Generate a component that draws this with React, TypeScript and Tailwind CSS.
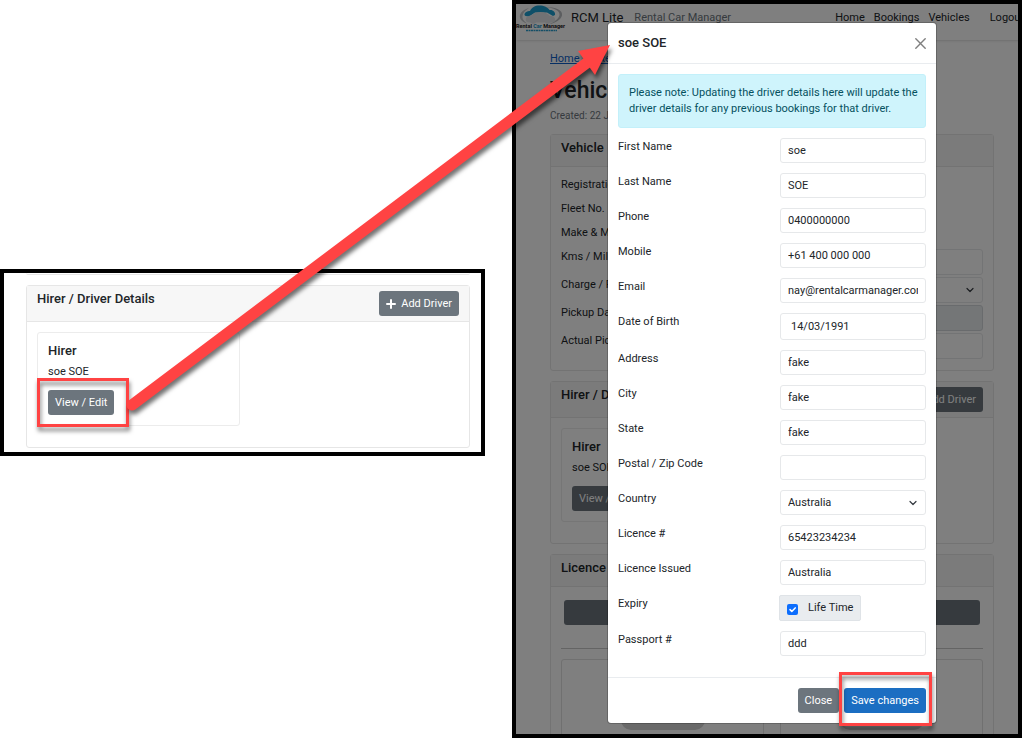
import { ReactNode } from "react"

interface IField {
    id: string
    label: string
    value: string
    kind?: "text" | "date" | "select" | "check"
}

const fields: IField[] = [
    { id: "firstName", label: "First Name", value: "soe" },
    { id: "lastName", label: "Last Name", value: "SOE" },
    { id: "phone", label: "Phone", value: "0400000000" },
    { id: "mobile", label: "Mobile", value: "+61 400 000 000" },
    { id: "email", label: "Email", value: "nay@rentalcarmanager.com" },
    { id: "dob", label: "Date of Birth", value: "14/03/1991", kind: "date" },
    { id: "address", label: "Address", value: "fake" },
    { id: "city", label: "City", value: "fake" },
    { id: "state", label: "State", value: "fake" },
    { id: "zip", label: "Postal / Zip Code", value: "" },
    { id: "country", label: "Country", value: "Australia", kind: "select" },
    { id: "licence", label: "Licence #", value: "65423234234" },
    { id: "issued", label: "Licence Issued", value: "Australia" },
    { id: "expiry", label: "Expiry", value: "Life Time", kind: "check" },
    { id: "passport", label: "Passport #", value: "ddd" },
]

const inputStyle = "block w-full min-w-0 rounded-[3px] border border-[#e6e8ea] bg-white text-[11px] leading-4 text-[#212529]"
const buttonStyle = "flex h-[25px] items-center whitespace-nowrap rounded-[3px] px-[7px] text-[11px] leading-4 text-white"

function Chevron() {
    return (
        <svg viewBox="0 0 16 16" className="pointer-events-none absolute right-[9px] top-[9px] size-2" fill="none" stroke="#343a40" strokeWidth="2.4" strokeLinecap="round" strokeLinejoin="round">
            <path d="m2 5 6 6 6-6" />
        </svg>
    )
}

function Card({ title, action, children }: { title: string, action?: ReactNode, children: ReactNode }) {
    return (
        <section className="rounded-[3px] border border-[#e6e6e6] bg-white">
            <div className={`flex items-start justify-between border-b border-[#e6e6e6] bg-[#f7f7f7] px-[10px] pt-[5px] ${action ? "h-9" : "h-8"}`}>
                <h2 className="text-[13px] font-medium leading-[15px]">{title}</h2>
                {action}
            </div>
            {children}
        </section>
    )
}

function HirerCard({ highlight }: { highlight?: boolean }) {
    const add = (
        <button className={`${buttonStyle} gap-[5px] bg-[#6c757d]`}>
            <svg viewBox="0 0 10 10" className="size-[10px]" stroke="currentColor" strokeWidth="2" strokeLinecap="round">
                <path d="M5 1v8M1 5h8" />
            </svg>
            Add Driver
        </button>
    )

    return (
        <Card title="Hirer / Driver Details" action={add}>
            <div className="grid grid-cols-2 gap-4 px-[10px] pb-[21px] pt-[10px]">
                <div className="rounded-[3px] border border-[#ececec] p-[10px]">
                    <h3 className="text-[13px] font-medium leading-[15px]">Hirer</h3>
                    <p className="mb-[10px] mt-[6px] leading-4">soe SOE</p>
                    <div className="relative w-max">
                        <button className={`${buttonStyle} bg-[#6c757d]`}>View / Edit</button>
                        {highlight && <Marker className="-bottom-3 -left-[11px] -right-[15px] -top-3" />}
                    </div>
                </div>
            </div>
        </Card>
    )
}

function Marker({ className }: { className: string }) {
    return <span className={`pointer-events-none absolute border-3 border-[#ff4343] drop-shadow-[1px_4px_2px_rgba(0,0,0,0.5)] ${className}`} />
}

function Logo() {
    return (
        <svg viewBox="0 0 100 54" className="h-[27px] w-[50px] shrink-0" role="img" aria-label="Rental Car Manager">
            <path d="M58 4c22 0 36 6 34 17-2 8-13 15-26 18 12-6 20-12 21-19 1-9-11-14-29-16z" fill="#b9bcc0" />
            <path d="M26 6C13 10 6 17 8 26c2 6 8 9 14 11-7-6-10-9-9-15 1-6 5-11 13-16z" fill="#c4c7ca" />
            <path d="M17 20c0-6 6-8 11-8C31 5 38 1 47 1s17 4 20 9c7-1 12 4 11 10l-4 2-12-7H38l-12 8-7-1z" fill="#1c9fd0" />
            <path d="M20 32c-2-6 2-10 10-11 6-5 11-7 19-7s14 3 19 8c8 0 11 4 10 9-1 4-5 4-9 4-2 3-9 4-11 0H40c-2 4-9 3-11 0-4 0-8 0-9-3z" fill="#e3e5e8" />
            <text x="0" y="46" fontSize="11" fontWeight="700" fontFamily="Roboto, sans-serif" fill="#222">Rental <tspan fill="#0d8fc4">Car</tspan> Manager</text>
            <path d="M20 51h62" stroke="#2a9fce" strokeWidth="3" strokeDasharray="4 1" />
        </svg>
    )
}

function VehiclePage() {
    return (
        <div className="col-start-1 row-start-1 h-0 min-h-full overflow-hidden bg-white" aria-hidden="true">
            <header className="flex h-9 items-center whitespace-nowrap bg-white pb-2 pr-1 shadow">
                <Logo />
                <span className="ml-[5px] text-[13px]">RCM Lite</span>
                <span className="ml-[11px] text-[#6c757d]">Rental Car Manager</span>
                <nav className="ml-auto flex gap-[9px]">
                    <a href="#home">Home</a>
                    <a href="#bookings">Bookings</a>
                    <a href="#vehicles">Vehicles</a>
                    <a href="#logout" className="ml-[11px]">Logout</a>
                </nav>
            </header>

            <main className="px-[34px] pt-[11px]">
                <div className="mb-[9px] flex gap-[7px] leading-4 text-[#6c757d]">
                    <a href="#home" className="text-[#0d5fc9] underline">Home</a>
                    <span>/</span>
                    <a href="#res" className="text-[#0d5fc9] underline">Res</a>
                </div>
                <h1 className="text-[23px] font-medium leading-[30px]">Vehicle</h1>
                <p className="mb-[10px] mt-[2px] text-[10px] leading-4 text-[#6c757d]">Created: 22 Jan</p>

                <div className="space-y-[10px]">
                    <Card title="Vehicle">
                        <div className="px-[10px] pb-[11px] pt-[10px] leading-4">
                            <div className="h-6">Registration</div>
                            <div className="h-6">Fleet No.</div>
                            <div className="h-6">Make &amp; M</div>
                            <div className="grid grid-cols-2 gap-x-4 gap-y-[2px]">
                                <label htmlFor="kms">Kms / Mile</label>
                                <input id="kms" className={`${inputStyle} h-[26px]`} />
                                <label htmlFor="charge">Charge / F</label>
                                <div className="relative">
                                    <select id="charge" className={`${inputStyle} h-[26px] appearance-none`} />
                                    <Chevron />
                                </div>
                                <label htmlFor="pickup">Pickup Da</label>
                                <input id="pickup" disabled className="h-[26px] w-full min-w-0 rounded-[3px] border border-[#d3d7db] bg-[#e9ecef]" />
                                <label htmlFor="actual">Actual Pic</label>
                                <input id="actual" className={`${inputStyle} h-[26px]`} />
                            </div>
                        </div>
                    </Card>

                    <HirerCard />

                    <Card title="Licence">
                        <div className="px-[10px] pt-[13px]">
                            <button className="mx-[3px] block h-[25px] w-[calc(100%-6px)] rounded-[3px] bg-[#6c757d]" />
                            <hr className="mb-[10px] mt-[23px] border-[#c8c8c8]" />
                            <div className="grid grid-cols-2 gap-4">
                                <div className="flex h-24 items-start justify-center rounded-[3px] border border-[#e0e0e0] pt-[46px]">
                                    <span className="h-6 w-[84px] rounded-[10px] bg-[#d2d2d2]" />
                                </div>
                                <div className="flex h-24 items-start justify-center rounded-[3px] border border-[#e0e0e0] pt-[46px]">
                                    <span className="h-6 w-[84px] rounded-[10px] bg-[#d2d2d2]" />
                                </div>
                            </div>
                        </div>
                    </Card>
                </div>
            </main>
        </div>
    )
}

function FieldControl({ id, value, kind }: IField) {
    if (kind === "check") {
        return (
            <label className="-ml-px flex h-[26px] w-max items-center rounded-[2px] border border-[#dfe3e7] bg-[#e9ecef] px-[7px] leading-4">
                <input id={id} type="checkbox" defaultChecked className="peer sr-only" />
                <svg viewBox="0 0 11 11" className="mr-[10px] mt-[2px] size-[11px]">
                    <rect width="11" height="11" rx="2" fill="#0d6efd" />
                    <path d="m3 5.6 1.8 1.8L8.2 3.9" fill="none" stroke="#fff" strokeWidth="1.5" strokeLinecap="round" strokeLinejoin="round" />
                </svg>
                {value}
            </label>
        )
    }

    if (kind === "select") {
        return (
            <div className="relative">
                <select id={id} defaultValue={value} className={`${inputStyle} h-[25px] appearance-none px-[7px]`}>
                    <option>{value}</option>
                </select>
                <Chevron />
            </div>
        )
    }

    return <input id={id} type="text" defaultValue={value} className={`${inputStyle} ${kind === "date" ? "h-[27px] px-[10px]" : "h-[25px] px-[7px]"}`} />
}

function DriverModal() {
    return (
        <div className="z-10 col-start-1 row-start-1 flex items-start justify-center bg-black/50 pb-[10px] pt-[18px]">
            <div role="dialog" aria-labelledby="driverTitle" className="w-[330px] rounded-[4px] border border-black/20 bg-white bg-clip-padding">
                <div className="flex h-[41px] items-center justify-between border-b border-[#e9ecef] px-[10px]">
                    <h2 id="driverTitle" className="text-[13px] font-medium leading-4">soe SOE</h2>
                    <button aria-label="Dismiss">
                        <svg viewBox="0 0 11 11" className="size-[11px]" stroke="#7f7f7f" strokeWidth="1.4" strokeLinecap="round">
                            <path d="m.8.8 9.4 9.4M10.2.8.8 10.2" />
                        </svg>
                    </button>
                </div>

                <form className="px-[10px] pb-[21px] pt-[10px]">
                    <p className="mb-[10px] rounded-[3px] border border-[#c3f0fa] bg-[#cff4fc] py-[10px] pl-[10px] pr-1 leading-4 text-[#055160]">
                        Please note: Updating the driver details here will update the driver details for any previous bookings for that driver.
                    </p>
                    <div className="space-y-[10px]">
                        {fields.map((field) => (
                            <div key={field.id} className="grid grid-cols-[162fr_146fr] items-start">
                                <label htmlFor={field.id} className="pt-px leading-4">{field.label}</label>
                                <FieldControl {...field} />
                            </div>
                        ))}
                    </div>
                </form>

                <div className="flex justify-end gap-[5px] border-t border-[#e9ecef] p-[10px]">
                    <button className={`${buttonStyle} bg-[#6c757d]`}>Close</button>
                    <div className="relative">
                        <button className={`${buttonStyle} bg-[#1b6ec2]`}>Save changes</button>
                        <Marker className="-bottom-[13px] -left-[5px] -right-[6px] -top-4" />
                    </div>
                </div>
            </div>
        </div>
    )
}

export default function App() {
    return (
        <div className="relative grid grid-cols-[485fr_510fr] items-start gap-[27px] bg-white font-[Roboto,sans-serif] text-[11px] text-[#212529]">
            <div className="mt-[269px] overflow-hidden border-4 border-black bg-white pb-1 pl-[22px] pr-[11px]">
                <div className="mb-[10px] h-[2px] rounded-b-[3px] border-b border-[#e6e6e6]" />
                <HirerCard highlight />
            </div>

            {/* page is slightly wider than its frame, so the right edge is cut */}
            <div className="isolate grid grid-cols-[calc(100%+10px)] overflow-hidden border-4 border-black">
                <VehiclePage />
                <DriverModal />
            </div>

            <svg viewBox="0 0 1022 738" className="pointer-events-none absolute left-0 top-0 z-20 w-full drop-shadow-[2px_4px_2px_rgba(0,0,0,0.55)]">
                <path d="M132 405 588 62" stroke="#ff4343" strokeWidth="11" strokeLinecap="round" />
                <path d="M610 45 578 51 595 75z" fill="#ff4343" />
            </svg>
        </div>
    )
}
